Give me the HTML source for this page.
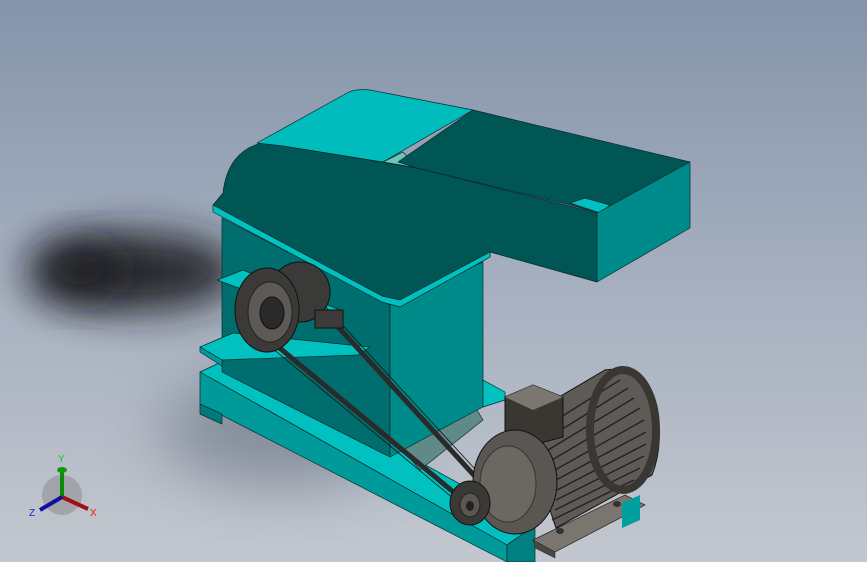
<!DOCTYPE html>
<html><head><style>
html,body{margin:0;padding:0;width:867px;height:562px;overflow:hidden}
body{background:linear-gradient(180deg,#8594aa 0%,#a2adbd 45%,#c3c7cf 100%)}
</style></head><body>
<svg width="867" height="562" viewBox="0 0 867 562" xmlns="http://www.w3.org/2000/svg" style="position:absolute;left:0;top:0">
<defs>
<filter id="bl" x="-50%" y="-50%" width="200%" height="200%"><feGaussianBlur stdDeviation="20"/></filter>
<filter id="bl2" x="-50%" y="-50%" width="200%" height="200%"><feGaussianBlur stdDeviation="30"/></filter>
</defs>
<!-- shadows -->
<ellipse cx="135" cy="272" rx="105" ry="40" fill="#1a1d22" filter="url(#bl)" opacity="0.9"/>
<ellipse cx="80" cy="270" rx="45" ry="30" fill="#15171b" filter="url(#bl)" opacity="0.7"/>
<ellipse cx="280" cy="430" rx="120" ry="55" fill="#556070" filter="url(#bl2)" opacity="0.5"/>
<g stroke="#0a2a2a" stroke-width="0.7" stroke-linejoin="round">
<!-- base -->
<polygon points="200,372 230,358 535,525 507,545" fill="#00c0c0"/>
<polygon points="200,372 507,545 507,562 200,404" fill="#009a9a"/>
<polygon points="507,545 535,525 535,562 507,562" fill="#008080"/>
<polygon points="200,404 222,414 222,424 200,414" fill="#007a7a"/>
<!-- body -->
<polygon points="222,218 390,305 390,457 222,372" fill="#006e6e"/>
<polygon points="390,302 483,262 483,407 390,457" fill="#008b8b"/>
<polygon points="483,380 505,392 505,400 483,407" fill="#00c0c0"/>
<polygon points="403,450 477,410 483,420 420,470" fill="#5f8a88"/>
<!-- lower shelf -->
<polygon points="200,347 233,333 370,347 358,355 222,360" fill="#00c0c0"/>
<polygon points="200,347 222,360 222,366 200,352" fill="#009a9a"/>
<!-- upper bracket plate -->
<polygon points="217,280 243,270 340,310 320,318" fill="#00c0c0"/>
<!-- hopper dark front -->
<path d="M213,205 L223,193 C226,165 240,148 262,143 L283,146 L417,168 L597,213 L597,282 L490,252 L490,257 L400,307 L382,302 Z" fill="#005555"/>
<polygon points="213,205 382,296 400,300 490,252 490,257 400,307 382,302 213,212" fill="#00c0c0"/>
<!-- lid -->
<path d="M257,143 L347,93 C352,90 360,89 370,90 L473,110 L383,162 L283,146 Z" fill="#00bcbc"/>
<polygon points="383,162 403,152 418,168" fill="#6fc4c0"/>
<!-- trough -->
<polygon points="473,110 690,162 600,213 570,205 417,168 398,162" fill="#005555"/>
<polygon points="570,203 585,198 610,205 600,213" fill="#00c0c0"/>
<polygon points="597,213 690,162 690,228 597,282" fill="#008b8b"/>
</g>
<!-- belts -->
<g stroke="#2a2a2a" stroke-width="5" fill="none" stroke-linecap="round">
<line x1="270" y1="340" x2="457" y2="495"/>
<line x1="297" y1="282" x2="482" y2="484"/>
</g>
<g stroke="#111" stroke-width="0.8" fill="none">
<line x1="266" y1="343" x2="454" y2="499"/>
<line x1="300" y1="279" x2="486" y2="481"/>
</g>
<!-- bearing + big pulley -->
<ellipse cx="300" cy="292" rx="30" ry="30" fill="#3a3a38" stroke="#111"/>
<rect x="315" y="310" width="28" height="18" fill="#3c3b39" stroke="#111"/>
<ellipse cx="267" cy="310" rx="32" ry="42" fill="#3b3a38" stroke="#111"/>
<ellipse cx="270" cy="312" rx="22" ry="30" fill="#5d5a56" stroke="#222"/>
<ellipse cx="272" cy="313" rx="12" ry="16" fill="#2a2a2a" stroke="#111"/>
<!-- motor feet -->
<polygon points="533,540 625,495 645,505 555,552" fill="#7a766f" stroke="#222" stroke-width="0.7"/>
<polygon points="533,540 555,552 555,558 535,548" fill="#4a4743" stroke="#222" stroke-width="0.5"/>
<polygon points="622,503 640,495 640,520 622,528" fill="#00a0a0"/>
<ellipse cx="560" cy="531" rx="4" ry="3" fill="#333"/>
<ellipse cx="617" cy="504" rx="4" ry="3" fill="#333"/>
<!-- motor body -->
<path d="M520,420 L605,370 C655,362 670,430 652,475 L556,528 Z" fill="#5e5a55" stroke="#111"/>
<g stroke="#222" stroke-width="1.4">
<line x1="540" y1="430" x2="620" y2="380"/><line x1="545" y1="440" x2="628" y2="388"/>
<line x1="548" y1="450" x2="634" y2="398"/><line x1="552" y1="460" x2="640" y2="408"/>
<line x1="555" y1="470" x2="644" y2="420"/><line x1="556" y1="480" x2="646" y2="432"/>
<line x1="557" y1="490" x2="646" y2="444"/><line x1="556" y1="500" x2="644" y2="456"/>
<line x1="555" y1="510" x2="640" y2="468"/><line x1="552" y1="520" x2="634" y2="480"/>
</g>
<ellipse cx="623" cy="430" rx="33" ry="60" fill="none" stroke="#3a3733" stroke-width="8"/>
<!-- terminal box -->
<polygon points="505,397 533,385 563,397 563,437 533,445 505,437" fill="#3a3733" stroke="#111"/>
<polygon points="505,397 533,385 563,397 533,410" fill="#7b7670"/>
<!-- flange -->
<ellipse cx="515" cy="482" rx="42" ry="52" fill="#5a5651" stroke="#111"/>
<ellipse cx="508" cy="484" rx="28" ry="38" fill="#6b6761" stroke="#333"/>
<!-- small pulley -->
<ellipse cx="470" cy="503" rx="20" ry="22" fill="#3a3936" stroke="#111"/>
<ellipse cx="470" cy="505" rx="10" ry="12" fill="#5a5752" stroke="#222"/>
<ellipse cx="470" cy="506" rx="4" ry="5" fill="#222"/>
<!-- triad -->
<g>
<circle cx="62" cy="495" r="20" fill="#808080" opacity="0.45"/>
<line x1="62" y1="497" x2="62" y2="470" stroke="#0a8a0a" stroke-width="4"/>
<ellipse cx="62" cy="470" rx="5" ry="3" fill="#0c9a0c"/>
<line x1="62" y1="497" x2="88" y2="509" stroke="#a01010" stroke-width="4"/>
<line x1="62" y1="497" x2="40" y2="510" stroke="#1010a0" stroke-width="4"/>
<text x="58" y="462" font-family="Liberation Sans,sans-serif" font-size="10" fill="#1ec81e">Y</text>
<text x="90" y="516" font-family="Liberation Sans,sans-serif" font-size="10" fill="#e02020">X</text>
<text x="29" y="516" font-family="Liberation Sans,sans-serif" font-size="10" fill="#2020e0">Z</text>
</g>
</svg>
</body></html>
